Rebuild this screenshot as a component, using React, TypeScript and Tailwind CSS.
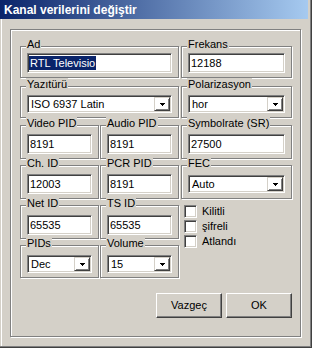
import type { ReactNode } from 'react';

const sunken =
	'border border-t-[#808080] border-l-[#808080] border-r-white border-b-white shadow-[inset_1px_1px_0_#404040,inset_-1px_-1px_0_#d4d0c8]';

const raised =
	'border border-t-[#d4d0c8] border-l-[#d4d0c8] border-r-[#404040] border-b-[#404040] shadow-[inset_1px_1px_0_#fff,inset_-1px_-1px_0_#808080]';

interface GroupProps {
	label: string;
	className: string;
	children?: ReactNode;
}

function Group({ label, className, children }: GroupProps) {
	return (
		<div
			className={`relative border border-[#808080] px-[6px] shadow-[inset_1px_1px_0_#fff,1px_1px_0_#fff] ${className}`}
		>
			<span className="absolute left-[5px] top-[-9px] bg-[#d4d0c8] px-[1px] leading-[13px]">{label}</span>
			{children}
		</div>
	);
}

function Field({ value, selected }: { value: string; selected?: boolean }) {
	return (
		<div className={`${sunken} flex h-[20px] items-center bg-white pl-[1px] leading-[13px]`}>
			{selected ? (
				<span className="bg-[#0a246a] pl-[1px] pr-[1px] leading-[14px] text-white">{value}</span>
			) : (
				<span className="pl-[1px]">{value}</span>
			)}
		</div>
	);
}

function Combo({ value }: { value: string }) {
	return (
		<div className={`${sunken} flex h-[18px] items-center bg-white leading-[13px]`}>
			<span className="min-w-0 flex-1 truncate pl-[3px]">{value}</span>
			<div className={`${raised} mr-[1px] flex h-[14px] w-[16px] items-center justify-center`}>
				<svg width="5" height="3" viewBox="0 0 5 3" shapeRendering="crispEdges">
					<path d="M0 0h5v1H0zM1 1h3v1H1zM2 2h1v1H2z" fill="#000" />
				</svg>
			</div>
		</div>
	);
}

function Check({ label }: { label: string }) {
	return (
		<div className="flex h-[13px] items-center gap-[5px]">
			<div className={`${sunken} h-[13px] w-[13px] bg-white`} />
			<span className="leading-[13px]">{label}</span>
		</div>
	);
}

function Button({ label }: { label: string }) {
	return (
		<div
			className={`flex h-[25px] w-[66px] items-center justify-center border border-t-white border-l-white border-r-[#404040] border-b-[#404040] shadow-[inset_-1px_-1px_0_#808080]`}
		>
			{label}
		</div>
	);
}

export default function App() {
	return (
		<div className="flex h-[348px] w-[312px] flex-col bg-[#d4d0c8] font-['Liberation_Sans',Arial,sans-serif] text-[11px] text-black shadow-[inset_-1px_-1px_0_#404040,inset_-2px_-2px_0_#808080,inset_1px_0_0_#d4d0c8,inset_2px_0_0_#fff]">
			<div className="mr-[4px] flex h-[19px] items-center bg-[linear-gradient(to_right,#0a246a,#a6caf0)] pl-[4px] text-[12px] font-bold text-white">
				Kanal verilerini değiştir
			</div>

			<div className="ml-[10px] mt-[10px] flex h-[308px] w-[291px] flex-col border border-[#808080] pl-[9px] shadow-[inset_1px_1px_0_#fff,1px_1px_0_#fff]">
				<div className="mt-[16px] flex gap-[2px]">
					<Group label="Ad" className="h-[32px] w-[159px] pt-[6px]">
						<Field value="RTL Televisio" selected />
					</Group>
					<Group label="Frekans" className="h-[32px] w-[111px] pt-[6px]">
						<Field value="12188" />
					</Group>
				</div>

				<div className="mt-[8px] flex gap-[2px]">
					<Group label="Yazıtürü" className="h-[32px] w-[159px] pt-[8px]">
						<Combo value="ISO 6937 Latin" />
					</Group>
					<Group label="Polarizasyon" className="h-[32px] w-[111px] pt-[8px]">
						<Combo value="hor" />
					</Group>
				</div>

				<div className="mt-[7px] flex gap-[2px]">
					<div className="flex gap-[1px]">
						<Group label="Video PID" className="h-[34px] w-[79px] pt-[8px]">
							<Field value="8191" />
						</Group>
						<Group label="Audio PID" className="h-[34px] w-[79px] pt-[8px]">
							<Field value="8191" />
						</Group>
					</div>
					<Group label="Symbolrate (SR)" className="h-[34px] w-[111px] pt-[8px]">
						<Field value="27500" />
					</Group>
				</div>

				<div className="mt-[6px] flex gap-[2px]">
					<div className="flex gap-[1px]">
						<Group label="Ch. ID" className="h-[34px] w-[79px] pt-[8px]">
							<Field value="12003" />
						</Group>
						<Group label="PCR PID" className="h-[34px] w-[79px] pt-[8px]">
							<Field value="8191" />
						</Group>
					</div>
					<Group label="FEC" className="h-[34px] w-[111px] pt-[9px]">
						<Combo value="Auto" />
					</Group>
				</div>

				<div className="mt-[6px] flex">
					<div className="flex w-[159px] flex-col">
						<div className="flex gap-[1px]">
							<Group label="Net ID" className="h-[34px] w-[79px] pt-[9px]">
								<Field value="65535" />
							</Group>
							<Group label="TS ID" className="h-[34px] w-[79px] pt-[9px]">
								<Field value="65535" />
							</Group>
						</div>
						<div className="mt-[6px] flex gap-[1px]">
							<Group label="PIDs" className="h-[33px] w-[79px] pt-[9px]">
								<Combo value="Dec" />
							</Group>
							<Group label="Volume" className="h-[33px] w-[79px] pt-[9px]">
								<Combo value="15" />
							</Group>
						</div>
					</div>
					<div className="ml-[5px] flex flex-col gap-[2px]">
						<Check label="Kilitli" />
						<Check label="şifreli" />
						<Check label="Atlandı" />
					</div>
				</div>

				<div className="ml-[136px] mt-[15px] flex gap-[4px]">
					<Button label="Vazgeç" />
					<Button label="OK" />
				</div>
			</div>
		</div>
	);
}
